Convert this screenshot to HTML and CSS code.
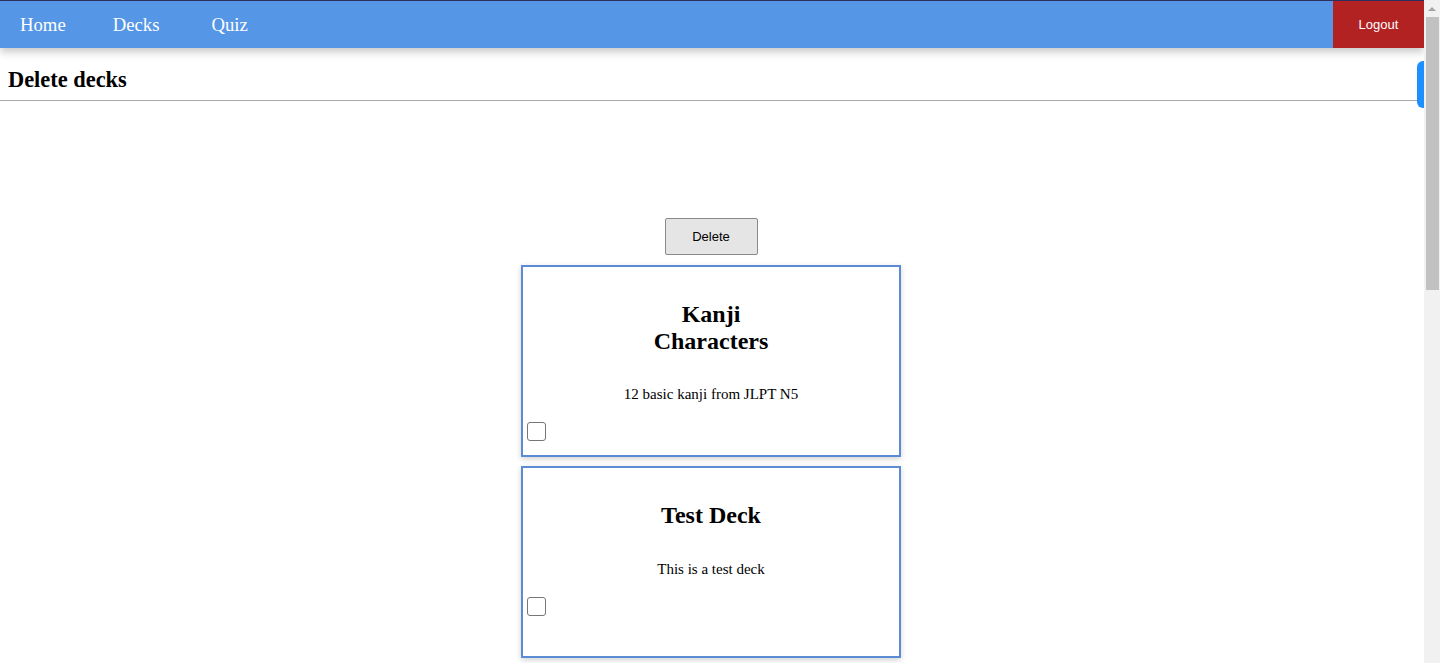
FILE: index.html
```html
<!DOCTYPE html>
<html lang="en">
<head>
<meta charset="utf-8">
<title>Delete decks</title>
<link rel="stylesheet" href="styles.css">
</head>
<body>
<div class="viewport">
  <div class="page">
    <nav class="navbar">
      <a class="nav-link" href="#">Home</a>
      <a class="nav-link" href="#">Decks</a>
      <a class="nav-link" href="#">Quiz</a>
      <button class="logout">Logout</button>
    </nav>
    <header class="page-header">
      <h1 class="page-title">Delete decks</h1>
    </header>
    <div class="side-tab"></div>
    <main class="content">
      <button class="delete-btn">Delete</button>
      <div class="card">
        <h2 class="card-title">Kanji Characters</h2>
        <p class="card-desc">12 basic kanji from JLPT N5</p>
        <input class="card-check" type="checkbox">
      </div>
      <div class="card">
        <h2 class="card-title">Test Deck</h2>
        <p class="card-desc">This is a test deck</p>
        <input class="card-check" type="checkbox">
      </div>
    </main>
  </div>
  <div class="scrollbar">
    <div class="scroll-arrow"></div>
    <div class="scroll-thumb"></div>
  </div>
</div>
</body>
</html>
```

FILE: styles.css
```css
html, body {
  margin: 0;
  padding: 0;
  height: 100%;
  overflow: hidden;
  background: #ffffff;
  font-family: "Liberation Serif", "Times New Roman", serif;
  color: #000;
}

.viewport {
  display: flex;
  height: 100vh;
}

.page {
  flex: 1;
  min-width: 0;
  position: relative;
  overflow: hidden;
}

.navbar {
  display: flex;
  align-items: center;
  height: 47px;
  border-top: 1px solid #2c2f5e;
  background: #5596e6;
  box-shadow: 0 4px 8px rgba(0, 0, 0, 0.22);
  position: relative;
  z-index: 2;
  padding-left: 20px;
  gap: 47px;
}

.nav-link {
  color: #ffffff;
  text-decoration: none;
  font-size: 18.72px;
  line-height: 22px;
}

.nav-link:nth-child(3) {
  margin-left: 5px;
}

.logout {
  margin-left: auto;
  width: 91px;
  height: 47px;
  border: none;
  background: #b22222;
  color: #ffffff;
  font-family: "Liberation Sans", Arial, sans-serif;
  font-size: 13px;
  padding: 0;
}

.page-header {
  padding: 19px 8px 8px;
  border-bottom: 1px solid #a9a9a9;
}

.page-title {
  margin: 0;
  font-size: 22.4px;
  line-height: 25px;
  font-weight: bold;
}

.side-tab {
  position: absolute;
  right: 0;
  top: 61px;
  width: 7px;
  height: 47px;
  background: #1e8fff;
  border-radius: 6px 0 0 6px;
}

.content {
  display: flex;
  flex-direction: column;
  align-items: center;
  padding-top: 117px;
}

.delete-btn {
  width: 93px;
  height: 37px;
  background: #e5e5e5;
  border: 1px solid #8a8a8a;
  border-radius: 2px;
  font-family: "Liberation Sans", Arial, sans-serif;
  font-size: 13px;
  color: #000;
  margin: 0 2px 10px 0;
}

.card {
  box-sizing: border-box;
  width: 380px;
  height: 192px;
  border: 2px solid #5b8bd4;
  box-shadow: 0 2px 6px rgba(0, 0, 0, 0.18);
  padding: 34px 4px 0;
  margin: 0 2px 9px 0;
  text-align: center;
  background: #fff;
}

.card-title {
  margin: 0 auto;
  max-width: 150px;
  font-size: 24px;
  line-height: 27px;
  font-weight: bold;
}

.card-desc {
  margin: 31px 0 0;
  font-size: 15px;
  line-height: 17px;
}

.card:last-child .card-desc {
  margin-top: 32px;
}

.card-check {
  display: block;
  appearance: none;
  -webkit-appearance: none;
  box-sizing: border-box;
  width: 19px;
  height: 19px;
  margin: 19px 0 0;
  border: 1px solid #767676;
  border-radius: 3px;
  background: #fff;
}

.scrollbar {
  width: 16px;
  background: #f1f1f1;
  display: flex;
  flex-direction: column;
}

.scroll-arrow {
  height: 17px;
  position: relative;
}

.scroll-arrow::after {
  content: "";
  display: block;
  width: 0;
  height: 0;
  margin: 7px auto 0;
  border-left: 4px solid transparent;
  border-right: 4px solid transparent;
  border-bottom: 4px solid #a3a3a3;
}

.scroll-thumb {
  height: 273px;
  margin: 0 1px 0 2px;
  background: #c1c1c1;
}
```
